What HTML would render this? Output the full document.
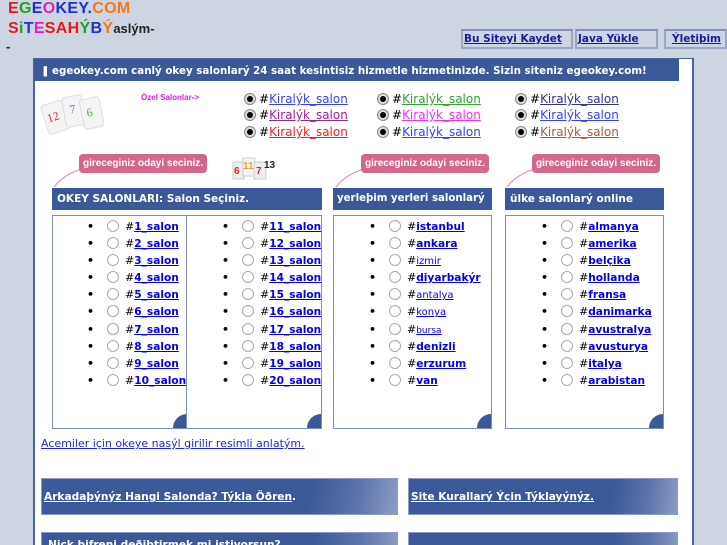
<!DOCTYPE html>
<html style="overflow:hidden;height:545px"><head><meta charset="utf-8"><style>
*{margin:0;padding:0;box-sizing:border-box}
body{width:727px;height:545px;overflow:hidden;background:#cdd5e3;font-family:"DejaVu Sans","Liberation Sans",sans-serif;position:relative}
.a{position:absolute}
.logo{font-family:"Liberation Sans",sans-serif;font-weight:bold;font-size:16px;letter-spacing:0.3px}
.nav{position:absolute;top:29px;height:20px;border:2px solid #9aa6c4;border-top-color:#8090b8;background:#cdd5e3;font-size:10.5px;font-weight:bold;color:#1a1a9a;text-decoration:underline;line-height:16px;padding-left:1px;white-space:nowrap;overflow:hidden}
.panel{position:absolute;left:33px;top:58px;width:661px;height:487px;background:#fff;border:2px solid #4a64a4;border-top:1px solid #4a64a4;border-bottom:none}
.bar{position:absolute;left:34px;top:59px;width:645px;height:22px;background:#3b5998;color:#fff;font-weight:bold;font-size:10.3px;line-height:24px;padding-left:18px;white-space:nowrap;overflow:hidden}
.k{position:absolute;font-size:12px;line-height:16px;white-space:nowrap;color:#000}
.k a{text-decoration:underline}
.rad{display:inline-block;width:12px;height:12px;border-radius:50%;border:1px solid #888;background:#fff;vertical-align:-2px;margin-right:3px;position:relative}
.rad.on::after{content:"";position:absolute;left:2px;top:2px;width:6px;height:6px;border-radius:50%;background:#000}
.rad.on{background:#ddd}
.pink{position:absolute;height:19px;width:128px;background:#d2698a;border-radius:4px;color:#fff;font-family:"Liberation Sans",sans-serif;font-weight:bold;font-size:10px;line-height:19px;text-align:center;white-space:nowrap}
.hd{position:absolute;top:188px;height:22px;background:#3b5998;color:#fff;font-weight:bold;font-size:10.5px;line-height:22px;padding-left:5px;white-space:nowrap;overflow:hidden}
.box{position:absolute;top:215px;height:214px;border:1px solid #7d8fc0;background:#fff;overflow:hidden}
.box::after{content:"";position:absolute;right:-14px;bottom:-14px;width:28px;height:28px;border-radius:50%;background:#3b5998}
.list{position:absolute;top:218px}
.r{height:17.1px;line-height:17px;font-size:11px;white-space:nowrap}
.r .b{display:inline-block;width:20px;font-size:11px;font-weight:bold;line-height:17px;vertical-align:top}
.r .rad{margin-right:6px;border-color:#aaa}
.r a{color:#0000ee;font-weight:bold;text-decoration:underline;font-size:10.6px}
.r a.n{font-weight:normal;font-size:10px}
.ban{position:absolute;height:37px;background:linear-gradient(100deg,#3b5998 75%,#5a73aa 88%,#8c9cc6 100%);color:#fff;font-weight:bold;font-size:10.6px;line-height:37px;padding-left:2px;white-space:nowrap;border:1px solid #8b9bc6;overflow:hidden}
.ban span{text-decoration:underline}
</style></head><body>
<div class="a logo" style="left:8px;top:0px"><span style="color:#e21b1b">E</span><span style="color:#22a022">G</span><span style="color:#2030d0">E</span><span style="color:#e020c0">O</span><span style="color:#2030d0">K</span><span style="color:#2030d0">E</span><span style="color:#2030d0">Y</span><span style="color:#2030d0">.</span><span style="color:#f07818">C</span><span style="color:#f07818">O</span><span style="color:#f07818">M</span></div>
<div class="a logo" style="left:8px;top:20px"><span style="color:#e21b1b">S</span><span style="color:#22a022">i</span><span style="color:#2030d0">T</span><span style="color:#e020c0">E</span><span style="color:#e21b1b">S</span><span style="color:#e21b1b">A</span><span style="color:#e21b1b">H</span><span style="color:#22a022">Ý</span><span style="color:#2030d0">B</span><span style="color:#f07818">Ý</span><span style="color:#222;font-size:13px;letter-spacing:0">aslým-</span></div>
<div class="a logo" style="left:6px;top:39px;font-size:13px;color:#222">-</div>

<div class="nav" style="left:461px;width:112px">Bu Siteyi Kaydet</div>
<div class="nav" style="left:575px;width:83px">Java Yükle</div>
<div class="nav" style="left:664px;width:63px;padding-left:6px">Ýletiþim</div>

<div class="panel"></div>
<div class="bar"><span style="position:absolute;left:7px;top:0">❚</span>egeokey.com canlý okey salonlarý 24 saat kesintisiz hizmetle hizmetinizde. Sizin siteniz egeokey.com!</div>

<svg class="a" style="left:38px;top:90px" width="66" height="48">
<g transform="rotate(-18 18 26)"><rect x="6" y="12" width="22" height="30" rx="3" fill="#f4f4f4" stroke="#ddd"/><text x="9" y="30" font-size="12" fill="#d02a2a" font-family="Liberation Serif">12</text></g>
<g transform="rotate(-10 36 22)"><rect x="26" y="6" width="20" height="30" rx="3" fill="#f4f4f4" stroke="#ddd"/><text x="32" y="23" font-size="12" fill="#4a8abb" font-family="Liberation Serif">7</text></g>
<g transform="rotate(-12 54 24)"><rect x="44" y="8" width="20" height="30" rx="3" fill="#f4f4f4" stroke="#ddd"/><text x="49" y="26" font-size="12" fill="#4ab04a" font-family="Liberation Serif">6</text></g>
</svg>
<div class="a" style="left:141px;top:93px;font-family:'Liberation Sans',sans-serif;font-weight:bold;font-size:8px;color:#e020e0">Özel Salonlar<span style="color:#2040e0">-</span>&gt;</div>

<div class="k" style="left:244px;top:91px"><span class="rad on"></span>#<a style="color:#3344ee">Kiralýk_salon</a></div>
<div class="k" style="left:244px;top:107px"><span class="rad on"></span>#<a style="color:#992299">Kiralýk_salon</a></div>
<div class="k" style="left:244px;top:124px"><span class="rad on"></span>#<a style="color:#ee2222">Kiralýk_salon</a></div>
<div class="k" style="left:377px;top:91px"><span class="rad on"></span>#<a style="color:#33a033">Kiralýk_salon</a></div>
<div class="k" style="left:377px;top:107px"><span class="rad on"></span>#<a style="color:#ee33ee">Kiralýk_salon</a></div>
<div class="k" style="left:377px;top:124px"><span class="rad on"></span>#<a style="color:#3344ee">Kiralýk_salon</a></div>
<div class="k" style="left:515px;top:91px"><span class="rad on"></span>#<a style="color:#333399">Kiralýk_salon</a></div>
<div class="k" style="left:515px;top:107px"><span class="rad on"></span>#<a style="color:#3344ee">Kiralýk_salon</a></div>
<div class="k" style="left:515px;top:124px"><span class="rad on"></span>#<a style="color:#a06040">Kiralýk_salon</a></div>

<svg class="a" style="left:50px;top:150px" width="640" height="40">
<path d="M4 37 Q14 24 32 19" stroke="#e08aa6" fill="none"/>
<path d="M286 37 Q296 24 314 19" stroke="#e08aa6" fill="none"/>
<path d="M457 37 Q467 24 485 19" stroke="#e08aa6" fill="none"/>
</svg>
<div class="pink" style="left:79px;top:154px">gireceginiz odayi seciniz.</div>
<div class="pink" style="left:361px;top:154px">gireceginiz odayi seciniz.</div>
<div class="pink" style="left:532px;top:154px">gireceginiz odayi seciniz.</div>
<svg class="a" style="left:231px;top:156px" width="50" height="26">
<rect x="2" y="6" width="11" height="17" fill="#eee" stroke="#ccc"/><text x="3" y="18" font-size="10" font-weight="bold" fill="#d02a2a" font-family="Liberation Sans">6</text>
<rect x="12" y="2" width="12" height="18" fill="#f4f4f4" stroke="#ccc"/><text x="12" y="13" font-size="10" font-weight="bold" fill="#e0a040" font-family="Liberation Sans">11</text>
<rect x="23" y="6" width="12" height="17" fill="#eee" stroke="#ccc"/><text x="25" y="18" font-size="10" font-weight="bold" fill="#d02a2a" font-family="Liberation Sans">7</text>
<text x="33" y="12" font-size="10" font-weight="bold" fill="#222" font-family="Liberation Sans">13</text>
</svg>

<div class="hd" style="left:52px;width:270px">OKEY SALONLARI: Salon Seçiniz.</div>
<div class="hd" style="left:333px;width:159px;font-size:10.2px;padding-left:4px">yerleþim yerleri salonlarý</div>
<div class="hd" style="left:505px;width:159px">ülke salonlarý online</div>

<div class="box" style="left:52px;width:136px"></div>
<div class="box" style="left:186px;width:136px"></div>
<div class="box" style="left:333px;width:159px"></div>
<div class="box" style="left:505px;width:159px"></div>

<div class="list" style="left:87px">
<div class="r"><span class="b">•</span><span class="rad"></span>#<a>1_salon</a></div>
<div class="r"><span class="b">•</span><span class="rad"></span>#<a>2_salon</a></div>
<div class="r"><span class="b">•</span><span class="rad"></span>#<a>3_salon</a></div>
<div class="r"><span class="b">•</span><span class="rad"></span>#<a>4_salon</a></div>
<div class="r"><span class="b">•</span><span class="rad"></span>#<a>5_salon</a></div>
<div class="r"><span class="b">•</span><span class="rad"></span>#<a>6_salon</a></div>
<div class="r"><span class="b">•</span><span class="rad"></span>#<a>7_salon</a></div>
<div class="r"><span class="b">•</span><span class="rad"></span>#<a>8_salon</a></div>
<div class="r"><span class="b">•</span><span class="rad"></span>#<a>9_salon</a></div>
<div class="r"><span class="b">•</span><span class="rad"></span>#<a>10_salon</a></div>
</div>
<div class="list" style="left:222px">
<div class="r"><span class="b">•</span><span class="rad"></span>#<a>11_salon</a></div>
<div class="r"><span class="b">•</span><span class="rad"></span>#<a>12_salon</a></div>
<div class="r"><span class="b">•</span><span class="rad"></span>#<a>13_salon</a></div>
<div class="r"><span class="b">•</span><span class="rad"></span>#<a>14_salon</a></div>
<div class="r"><span class="b">•</span><span class="rad"></span>#<a>15_salon</a></div>
<div class="r"><span class="b">•</span><span class="rad"></span>#<a>16_salon</a></div>
<div class="r"><span class="b">•</span><span class="rad"></span>#<a>17_salon</a></div>
<div class="r"><span class="b">•</span><span class="rad"></span>#<a>18_salon</a></div>
<div class="r"><span class="b">•</span><span class="rad"></span>#<a>19_salon</a></div>
<div class="r"><span class="b">•</span><span class="rad"></span>#<a>20_salon</a></div>
</div>
<div class="list" style="left:369px">
<div class="r"><span class="b">•</span><span class="rad"></span>#<a>istanbul</a></div>
<div class="r"><span class="b">•</span><span class="rad"></span>#<a>ankara</a></div>
<div class="r"><span class="b">•</span><span class="rad"></span>#<a class="n">izmir</a></div>
<div class="r"><span class="b">•</span><span class="rad"></span>#<a>diyarbakýr</a></div>
<div class="r"><span class="b">•</span><span class="rad"></span>#<a class="n">antalya</a></div>
<div class="r"><span class="b">•</span><span class="rad"></span>#<a class="n">konya</a></div>
<div class="r"><span class="b">•</span><span class="rad"></span>#<a class="n" style="font-size:9px">bursa</a></div>
<div class="r"><span class="b">•</span><span class="rad"></span>#<a>denizli</a></div>
<div class="r"><span class="b">•</span><span class="rad"></span>#<a>erzurum</a></div>
<div class="r"><span class="b">•</span><span class="rad"></span>#<a>van</a></div>
</div>
<div class="list" style="left:541px">
<div class="r"><span class="b">•</span><span class="rad"></span>#<a>almanya</a></div>
<div class="r"><span class="b">•</span><span class="rad"></span>#<a>amerika</a></div>
<div class="r"><span class="b">•</span><span class="rad"></span>#<a>belçika</a></div>
<div class="r"><span class="b">•</span><span class="rad"></span>#<a>hollanda</a></div>
<div class="r"><span class="b">•</span><span class="rad"></span>#<a>fransa</a></div>
<div class="r"><span class="b">•</span><span class="rad"></span>#<a>danimarka</a></div>
<div class="r"><span class="b">•</span><span class="rad"></span>#<a>avustralya</a></div>
<div class="r"><span class="b">•</span><span class="rad"></span>#<a>avusturya</a></div>
<div class="r"><span class="b">•</span><span class="rad"></span>#<a>italya</a></div>
<div class="r"><span class="b">•</span><span class="rad"></span>#<a>arabistan</a></div>
</div>

<div class="a" style="left:41px;top:437px;font-size:11px;color:#2222ee;text-decoration:underline;white-space:nowrap">Acemiler için okeye nasýl girilir resimli anlatým.</div>

<div class="ban" style="left:41px;top:478px;width:357px"><span>Arkadaþýnýz Hangi Salonda? Týkla Öðren</span>.</div>
<div class="ban" style="left:408px;top:478px;width:270px"><span>Site Kurallarý Ýçin Týklayýnýz.</span></div>
<div class="ban" style="left:41px;top:532px;width:357px;line-height:24px;padding-left:6px">Nick þifreni deðiþtirmek mi istiyorsun?</div>
<div class="ban" style="left:408px;top:532px;width:270px"></div>
</body></html>
